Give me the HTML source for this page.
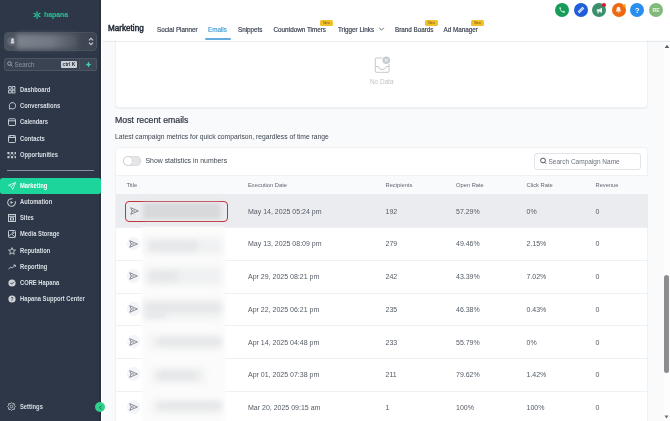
<!DOCTYPE html>
<html><head><meta charset="utf-8">
<style>
*{box-sizing:border-box;margin:0;padding:0}
html,body{width:670px;height:421px;overflow:hidden;background:#f8fafc;font-family:"Liberation Sans",sans-serif}
.abs{position:absolute}
#sb{position:absolute;left:0;top:0;width:101px;height:421px;background:#2d3748;overflow:hidden}
#sbline{position:absolute;left:101px;top:0;width:1px;height:421px;background:#ffffff}
.logo{position:absolute;left:44px;top:10px;color:#27c79a;font-weight:bold;font-size:6.9px;line-height:9px;letter-spacing:0}
.acct{position:absolute;left:3.5px;top:31.8px;width:93.5px;height:19.5px;border-radius:4px;background:linear-gradient(90deg,#4b535f,#444c59 60%,#3c4452);border:1px solid #4a525e}
.srch{position:absolute;left:4px;top:58px;width:76px;height:13px;border-radius:2px 0 0 2px;background:#3a4352;border:1px solid #4d5563}
.plus{position:absolute;left:79px;top:58px;width:18px;height:13px;border-radius:0 2px 2px 0;background:#3d4655;border:1px solid #4d5563}
.nav{position:absolute;left:0;width:101px;height:12px;color:#dadee4;font-size:6.3px;font-weight:bold}
.nav span{position:absolute;left:19.8px;top:0.5px;line-height:10px;transform:scaleX(0.92);transform-origin:0 0;white-space:nowrap}
.nav svg{position:absolute;left:8px;top:2px;width:8px;height:8px}
#hdr{position:absolute;left:102px;top:0;width:568px;height:40px;background:#fff}
#hdrline{position:absolute;left:102px;top:40.5px;width:568px;height:1.5px;background:#eaecee}
.tab{position:absolute;top:24.6px;font-size:6.3px;color:#3a4351;line-height:9px;-webkit-text-stroke:0.18px currentColor}
.new{position:absolute;top:20px;width:13px;height:6px;background:#f0bf2a;border-radius:1.5px;font-size:3.3px;color:#6a5210;text-align:center;line-height:6px}
.circ{position:absolute;top:3px;width:14px;height:14px;border-radius:50%}
.card{position:absolute;background:#fff;border:1px solid #f0f1f3;border-radius:4px;box-shadow:0 1px 1px rgba(20,30,50,.05)}
.th{position:absolute;top:181px;font-size:5.75px;color:#5f6672;line-height:8px}
.rowline{position:absolute;left:116px;width:532px;height:1px;background:#eef0f2}
.td{position:absolute;font-size:7px;color:#535a66;line-height:10px;margin-top:1.3px}
.ico{position:absolute;left:126.8px;width:13.5px;height:13.5px;border-radius:50%;background:#f3f4f7;margin-top:0.3px}
.ico svg{position:absolute;left:2.7px;top:3px}
.blurp{position:absolute;left:142px;width:83px;height:33px;background:#fbfbfb;filter:blur(1.5px)}
.smudge{position:absolute;height:8px;background:#e5e6e8;filter:blur(2.8px);border-radius:4px}
#root{position:absolute;left:0;top:0;width:670px;height:421px;overflow:hidden;will-change:transform;background:#f8fafc}
</style></head><body><div id="root">
<div id="sb">
  <div class="abs" style="left:99px;top:0;width:2px;height:421px;background:#292f3b"></div>
  <svg class="abs" style="left:33px;top:11px" width="8" height="8" viewBox="0 0 8 8"><g stroke="#2bc99b" stroke-width="1.15" stroke-linecap="round"><path d="M4 0.6 V2.9 M4 5.1 V7.4 M1 2.3 L3 3.4 M5 4.6 L7 5.7 M1 5.7 L3 4.6 M5 3.4 L7 2.3"/></g></svg>
  <div class="logo">hapana</div>
  <div class="acct"></div>
  <div class="abs" style="left:16px;top:34px;width:62px;height:15px;background:linear-gradient(90deg,#7d838c,#737a84 55%,#4d5561);filter:blur(2.5px);border-radius:3px"></div>
  <div class="abs" style="left:7px;top:36.5px;width:9.5px;height:9.5px;border-radius:50%;background:#5f6671;filter:blur(0.7px)"></div>
  <svg class="abs" style="left:10px;top:38px" width="5" height="6" viewBox="0 0 5 6"><circle cx="2.5" cy="1.8" r="1.5" fill="#d5d9df"/><rect x="0.6" y="3.3" width="3.8" height="2.2" rx="1" fill="#d5d9df"/></svg>
  <svg class="abs" style="left:88px;top:37px" width="6" height="9" viewBox="0 0 6 9"><path d="M1 3.3 L3 1.3 L5 3.3 M1 5.7 L3 7.7 L5 5.7" stroke="#c9cdd3" stroke-width="1.1" fill="none"/></svg>
  <div class="srch"></div>
  <svg class="abs" style="left:7px;top:61px" width="6" height="6" viewBox="0 0 6 6"><circle cx="2.5" cy="2.5" r="1.8" stroke="#aab0b8" stroke-width="0.9" fill="none"/><line x1="3.8" y1="3.8" x2="5.4" y2="5.4" stroke="#aab0b8" stroke-width="0.9"/></svg>
  <div class="abs" style="left:14.5px;top:59.5px;font-size:6.3px;color:#8e95a0;line-height:9px">Search</div>
  <div class="abs" style="left:61px;top:61px;width:16px;height:7px;background:#cdd1d7;border-radius:1px;font-size:5px;line-height:7px;color:#2a323e;text-align:center;font-weight:bold">ctrl K</div>
  <div class="plus"></div>
  <svg class="abs" style="left:85px;top:61.3px" width="7" height="7" viewBox="0 0 7 7"><path d="M3.5 0.5 Q3.9 3.1 6.5 3.5 Q3.9 3.9 3.5 6.5 Q3.1 3.9 0.5 3.5 Q3.1 3.1 3.5 0.5 Z" fill="#45d2ab"/></svg>

  <div class="nav" style="top:84px"><svg viewBox="0 0 8 8" style="width:7.5px;height:7.5px;top:2.3px"><g fill="none" stroke="#bcc2cb" stroke-width="1.1"><rect x="0.6" y="0.6" width="2.9" height="2.9" rx="1"/><rect x="4.5" y="0.6" width="2.9" height="2.9" rx="0.3"/><rect x="0.6" y="4.5" width="2.9" height="2.9" rx="0.3"/><rect x="4.5" y="4.5" width="2.9" height="2.9" rx="0.3"/></g></svg><span>Dashboard</span></div>
  <div class="nav" style="top:100px"><svg viewBox="0 0 8 8"><path d="M1.3 7 L1.7 5.3 A3.2 3.2 0 1 1 3 6.6 Z" fill="none" stroke="#c6cbd2" stroke-width="1"/></svg><span>Conversations</span></div>
  <div class="nav" style="top:116px"><svg viewBox="0 0 8 8"><g fill="none" stroke="#c6cbd2" stroke-width="1"><rect x="0.5" y="0.8" width="7" height="6.7" rx="0.8"/><line x1="0.5" y1="2.8" x2="7.5" y2="2.8"/></g></svg><span>Calendars</span></div>
  <div class="nav" style="top:133px"><svg viewBox="0 0 8 8"><g fill="none" stroke="#c6cbd2" stroke-width="1"><rect x="0.5" y="0.5" width="7" height="7" rx="0.8"/><line x1="0.5" y1="2.5" x2="7.5" y2="2.5"/><line x1="2" y1="0.5" x2="2" y2="2.5"/><line x1="6" y1="0.5" x2="6" y2="2.5"/></g></svg><span>Contacts</span></div>
  <div class="nav" style="top:149px"><svg viewBox="0 0 8 8" style="left:7px;top:2px;width:9px;height:9px"><g fill="#c3c8d0"><rect x="0.3" y="0.8" width="2" height="2" rx="0.6"/><rect x="3.5" y="0.8" width="2" height="2" rx="0.6"/><rect x="6.7" y="0.8" width="2" height="2" rx="0.6"/><rect x="0.3" y="4.5" width="2" height="2" rx="0.6"/><rect x="3.5" y="4.5" width="2" height="2" rx="0.6"/><rect x="6.7" y="4.5" width="2" height="2" rx="0.6"/></g><path d="M2.3 2.8 L3.5 4.5 M5.5 2.8 L6.7 4.5 M5.5 4.5 L6.7 2.8 M2.3 4.5 L3.5 2.8" stroke="#8d949e" stroke-width="0.5"/></svg><span>Opportunities</span></div>
  <div class="abs" style="left:7px;top:170px;width:87px;height:1px;background:#8a919c"></div>
  <div class="abs" style="left:0;top:177.8px;width:101px;height:16.2px;background:#1bd59a;border-radius:2.5px"></div>
  <div class="nav" style="top:180px;color:#fff"><svg viewBox="0 0 8 8"><path d="M7.5 0.5 L0.5 3.2 L3.5 4.5 L4.8 7.5 Z M3.5 4.5 L7.5 0.5" fill="none" stroke="#f4fffb" stroke-width="0.7" stroke-linejoin="round"/></svg><span>Marketing</span></div>
  <div class="nav" style="top:196px"><svg viewBox="0 0 8 8" style="left:7px;top:1.8px;width:9px;height:9px"><path d="M4.9 0.7 A3.4 3.4 0 1 0 7.2 2.8" fill="none" stroke="#c6cbd2" stroke-width="0.9"/><path d="M3.1 2.6 L5.6 4 L3.1 5.4 Z" fill="#c6cbd2"/></svg><span>Automation</span></div>
  <div class="nav" style="top:212px"><svg viewBox="0 0 8 8"><g fill="none" stroke="#c6cbd2" stroke-width="1"><rect x="0.5" y="0.5" width="7" height="7"/><line x1="0.5" y1="2.3" x2="7.5" y2="2.3"/><rect x="2.5" y="3.8" width="3" height="2.2"/></g></svg><span>Sites</span></div>
  <div class="nav" style="top:228px"><svg viewBox="0 0 8 8"><g fill="none" stroke="#c6cbd2" stroke-width="1"><rect x="0.5" y="0.5" width="7" height="7" rx="0.8"/><path d="M0.8 6.5 L3.5 3.8 L7 7"/><circle cx="5.3" cy="2.6" r="0.8"/></g></svg><span>Media Storage</span></div>
  <div class="nav" style="top:245px"><svg viewBox="0 0 8 8"><path d="M4 0.6 L5 3 L7.5 3.1 L5.6 4.7 L6.2 7.3 L4 5.9 L1.8 7.3 L2.4 4.7 L0.5 3.1 L3 3 Z" fill="none" stroke="#c6cbd2" stroke-width="0.9" stroke-linejoin="round"/></svg><span>Reputation</span></div>
  <div class="nav" style="top:261px"><svg viewBox="0 0 8 8"><path d="M0.5 6.3 L2.8 3.9 L4.3 5 L7.3 2 M5.3 2 H7.3 V4" fill="none" stroke="#c6cbd2" stroke-width="0.9"/></svg><span>Reporting</span></div>
  <div class="nav" style="top:277px"><svg viewBox="0 0 8 8"><circle cx="4" cy="4" r="3.6" fill="#d0d4da"/><path d="M2.3 3.8 L3.6 5.2 L5.8 2.8" stroke="#2b3545" stroke-width="0.9" fill="none"/></svg><span>CORE Hapana</span></div>
  <div class="nav" style="top:293px"><svg viewBox="0 0 8 8"><circle cx="4" cy="4" r="3.6" fill="#d0d4da"/><text x="4" y="6" font-size="5" text-anchor="middle" fill="#2b3545" font-family="Liberation Sans" font-weight="bold">?</text></svg><span>Hapana Support Center</span></div>
  <div class="nav" style="top:401px"><svg viewBox="0 0 8 8" style="left:7px;top:1px;width:9px;height:9px"><path d="M4 0.5 L5 1.5 L6.5 1.5 L6.5 3 L7.5 4 L6.5 5 L6.5 6.5 L5 6.5 L4 7.5 L3 6.5 L1.5 6.5 L1.5 5 L0.5 4 L1.5 3 L1.5 1.5 L3 1.5 Z" fill="none" stroke="#c6cbd2" stroke-width="0.8"/><circle cx="4" cy="4" r="1.2" fill="none" stroke="#c6cbd2" stroke-width="0.7"/></svg><span>Settings</span></div>
</div>
<div id="sbline"></div>
<div class="abs" style="left:95px;top:402.3px;width:10px;height:10px;border-radius:50%;background:#2fcf8e"></div>
<svg class="abs" style="left:96.5px;top:404px" width="7" height="7" viewBox="0 0 7 7"><path d="M4.3 1.8 L2.6 3.5 L4.3 5.2" stroke="#106a45" stroke-width="1" fill="none"/></svg>

<div class="card" style="left:115px;top:36px;width:533px;height:72px;border-radius:0 0 4px 4px"></div>
<div id="hdr"></div><div id="hdrline"></div>
<div class="abs" style="left:108px;top:23px;font-size:8.15px;color:#222a36;line-height:11px;-webkit-text-stroke:0.45px #222a36">Marketing</div>
<div class="tab" style="left:157px">Social Planner</div>
<div class="tab" style="left:208px;color:#4aa1d8">Emails</div>
<div class="abs" style="left:205px;top:38.2px;width:26px;height:1.5px;background:#62acdf;border-radius:1px"></div>
<div class="tab" style="left:238px">Snippets</div>
<div class="tab" style="left:273.5px">Countdown Timers</div>
<div class="new" style="left:320px">New</div>
<div class="tab" style="left:338px">Trigger Links</div>
<svg class="abs" style="left:378px;top:26px" width="7" height="6" viewBox="0 0 7 6"><path d="M1.2 1.8 L3.5 4.1 L5.8 1.8" stroke="#4a5360" stroke-width="0.9" fill="none"/></svg>
<div class="tab" style="left:395px">Brand Boards</div>
<div class="new" style="left:425px">New</div>
<div class="tab" style="left:443.5px">Ad Manager</div>
<div class="new" style="left:471px">New</div>

<div class="circ" style="left:554.7px;background:#179b59"></div>
<svg class="abs" style="left:557.5px;top:6px" width="8" height="8" viewBox="0 0 7 7"><path d="M1.2 1 C1 3.5 3.5 6 6 5.8 L6 4.6 L4.6 4.1 L4 4.7 C3.2 4.3 2.6 3.7 2.2 2.9 L2.8 2.3 L2.3 1 Z" fill="#c4ebd3"/></svg>
<div class="circ" style="left:573.5px;background:#1f5ed8"></div>
<svg class="abs" style="left:576.5px;top:6px" width="8" height="8" viewBox="0 0 8 8"><g fill="#dfe8fb" transform="rotate(-45 4 4)"><rect x="0.5" y="2.6" width="7" height="2.8" rx="0.5"/></g><g fill="#1f5ed8" transform="rotate(-45 4 4)"><circle cx="2.3" cy="4" r="0.45"/><circle cx="4" cy="4" r="0.45"/><circle cx="5.7" cy="4" r="0.45"/></g></svg>
<div class="circ" style="left:592.2px;background:#3b8f6d"></div>
<svg class="abs" style="left:595.5px;top:6.5px" width="8" height="7" viewBox="0 0 8 7"><path d="M0.8 2.3 H2.8 L6 0.8 V6 L2.8 4.6 H0.8 Z" fill="#e6f2ec"/><rect x="1.5" y="4.4" width="1.3" height="2" fill="#e6f2ec"/></svg>
<div class="abs" style="left:602.2px;top:2.8px;width:4.2px;height:4.2px;border-radius:50%;background:#e0142b"></div>
<div class="circ" style="left:611.6px;background:#ee6912"></div>
<svg class="abs" style="left:615px;top:6px" width="7" height="8" viewBox="0 0 7 8"><path d="M3.5 0.8 C1.8 0.8 1.6 2.5 1.6 3.6 C1.6 4.8 0.8 5.6 0.8 5.6 H6.2 C6.2 5.6 5.4 4.8 5.4 3.6 C5.4 2.5 5.2 0.8 3.5 0.8 Z M2.7 6.3 H4.3 L3.5 7.2 Z" fill="#fff4ea"/></svg>
<div class="abs" style="left:622.5px;top:3.5px;width:3px;height:3px;border-radius:50%;background:#f5b021"></div>
<div class="circ" style="left:630.2px;background:#2a8ef1"></div>
<div class="abs" style="left:630.2px;top:5.5px;width:14px;text-align:center;font-size:7.5px;font-weight:bold;color:#fff;line-height:9px">?</div>
<div class="circ" style="left:649.2px;background:#80b97a"></div>
<div class="abs" style="left:649.2px;top:6.5px;width:14px;text-align:center;font-size:5.2px;font-weight:bold;color:#eef6ea;line-height:7px">RE</div>

<!-- No data card -->
<svg class="abs" style="left:374px;top:54.7px" width="18" height="19" viewBox="0 0 18 19"><path d="M8.5 3 H2.3 Q1.3 3 1.3 4 V16.3 Q1.3 17.3 2.3 17.3 H14 Q15 17.3 15 16.3 V9" fill="none" stroke="#c5c8cd" stroke-width="1"/><path d="M1.3 11.5 H4.3 Q5 14.6 8.2 14.6 Q11.4 14.6 12 11.5 H15" fill="none" stroke="#c5c8cd" stroke-width="1"/><circle cx="12.3" cy="5.3" r="3.8" fill="#c8cbd0"/><path d="M10.9 3.9 L13.7 6.7 M13.7 3.9 L10.9 6.7" stroke="#fff" stroke-width="0.9"/></svg>
<div class="abs" style="left:370px;top:77.4px;font-size:6.4px;color:#bec1c7;line-height:9px">No Data</div>

<div class="abs" style="left:115px;top:114.8px;font-size:8.75px;color:#2d3440;line-height:11px;-webkit-text-stroke:0.2px #2d3440">Most recent emails</div>
<div class="abs" style="left:115px;top:131.5px;font-size:6.75px;color:#3e4550;line-height:9px">Latest campaign metrics for quick comparison, regardless of time range</div>

<!-- table card -->
<div class="card" style="left:115px;top:146.5px;width:533px;height:290px"></div>
<div class="abs" style="left:123px;top:156px;width:17.5px;height:10px;border-radius:5px;background:#e4e5e7;box-shadow:inset 0 0 0 0.6px #d3d5d8"></div>
<div class="abs" style="left:123.7px;top:156.7px;width:8.6px;height:8.6px;border-radius:50%;background:#fff;box-shadow:0 0 0 0.6px #c9cbcf"></div>
<div class="abs" style="left:145.5px;top:155.8px;font-size:6.9px;color:#3f4651;line-height:9px">Show statistics in numbers</div>
<div class="abs" style="left:533.5px;top:152.5px;width:107.5px;height:17px;border:1px solid #e1e4e8;border-radius:3px;background:#fff"></div>
<svg class="abs" style="left:539.5px;top:157px" width="7" height="8" viewBox="0 0 7 8"><circle cx="3" cy="3.5" r="2.4" stroke="#3a414c" stroke-width="0.9" fill="none"/><line x1="4.7" y1="5.3" x2="6.2" y2="6.8" stroke="#3a414c" stroke-width="0.9"/></svg>
<div class="abs" style="left:548.5px;top:156.5px;font-size:6.5px;color:#6a717c;line-height:9px">Search Campaign Name</div>

<div class="abs" style="left:116px;top:174.5px;width:532px;height:19.5px;background:#f9fafb;border-top:1px solid #eff1f3"></div>
<div class="th" style="left:126.5px">Title</div>
<div class="th" style="left:248px">Execution Date</div>
<div class="th" style="left:385.5px">Recipients</div>
<div class="th" style="left:456px">Open Rate</div>
<div class="th" style="left:526.5px">Click Rate</div>
<div class="th" style="left:595.5px">Revenue</div>

<div class="abs" style="left:116px;top:194px;width:532px;height:33px;background:#ebecef"></div>
<div class="rowline" style="top:227.1px"></div>
<div class="rowline" style="top:259.8px"></div>
<div class="rowline" style="top:292.5px"></div>
<div class="rowline" style="top:325.3px"></div>
<div class="rowline" style="top:358.0px"></div>
<div class="rowline" style="top:390.7px"></div>

<!-- blurred title patches -->
<div class="blurp" style="top:227px;height:198px"></div>
<div class="smudge" style="left:145px;top:238px;width:77px;height:16px;background:#f0f1f2;filter:blur(3px)"></div>
<div class="smudge" style="left:145px;top:267px;width:77px;height:18px;background:#f0f1f2;filter:blur(3px)"></div>
<div class="smudge" style="left:143px;top:300px;width:79px;height:19px;background:#f0f1f2;filter:blur(3px)"></div>
<div class="smudge" style="left:150px;top:335px;width:72px;height:14px;background:#f0f1f2;filter:blur(3px)"></div>
<div class="smudge" style="left:152px;top:368px;width:53px;height:15px;background:#f0f1f2;filter:blur(3px)"></div>
<div class="smudge" style="left:152px;top:400px;width:70px;height:13px;background:#f0f1f2;filter:blur(3px)"></div>
<div class="smudge" style="left:149px;top:241px;width:49px;height:10px;background:#e6e7e9;filter:blur(2.5px)"></div>
<div class="smudge" style="left:149px;top:271px;width:29px;height:11px;background:#e6e7e9;filter:blur(2.5px)"></div>
<div class="smudge" style="left:145px;top:303px;width:76px;height:9px;background:#e6e7e9;filter:blur(2.5px)"></div>
<div class="smudge" style="left:158px;top:338px;width:63px;height:8px;background:#e6e7e9;filter:blur(2.5px)"></div>
<div class="smudge" style="left:158px;top:371px;width:39px;height:9px;background:#e6e7e9;filter:blur(2.5px)"></div>
<div class="smudge" style="left:158px;top:402px;width:63px;height:8px;background:#e6e7e9;filter:blur(2.5px)"></div>
<div class="smudge" style="left:145px;top:312px;width:21px;height:6px;background:#e6e7e9;filter:blur(2.5px)"></div>

<!-- row 1 highlight -->
<div class="abs" style="left:125px;top:201px;width:102.5px;height:20.5px;border:1.6px solid #c2323f;border-radius:4px"></div>
<div class="abs" style="left:143px;top:203px;width:78px;height:16px;background:#d8d9db;filter:blur(2px)"></div>
<svg class="abs" style="left:129.5px;top:206.8px" width="9" height="8" viewBox="0 0 10 9"><path d="M0.8 0.8 L9.3 4.5 L0.8 8.2 L2.4 4.5 Z M2.4 4.5 H5.6" fill="none" stroke="#666c77" stroke-width="0.85" stroke-linejoin="round"/></svg>

<div class="ico" style="top:236.3px"><svg width="9" height="8" viewBox="0 0 10 9"><path d="M0.8 0.8 L9.3 4.5 L0.8 8.2 L2.4 4.5 Z M2.4 4.5 H5.6" fill="none" stroke="#666c77" stroke-width="0.85" stroke-linejoin="round"/></svg></div>
<div class="ico" style="top:269.0px"><svg width="9" height="8" viewBox="0 0 10 9"><path d="M0.8 0.8 L9.3 4.5 L0.8 8.2 L2.4 4.5 Z M2.4 4.5 H5.6" fill="none" stroke="#666c77" stroke-width="0.85" stroke-linejoin="round"/></svg></div>
<div class="ico" style="top:301.8px"><svg width="9" height="8" viewBox="0 0 10 9"><path d="M0.8 0.8 L9.3 4.5 L0.8 8.2 L2.4 4.5 Z M2.4 4.5 H5.6" fill="none" stroke="#666c77" stroke-width="0.85" stroke-linejoin="round"/></svg></div>
<div class="ico" style="top:334.5px"><svg width="9" height="8" viewBox="0 0 10 9"><path d="M0.8 0.8 L9.3 4.5 L0.8 8.2 L2.4 4.5 Z M2.4 4.5 H5.6" fill="none" stroke="#666c77" stroke-width="0.85" stroke-linejoin="round"/></svg></div>
<div class="ico" style="top:367.2px"><svg width="9" height="8" viewBox="0 0 10 9"><path d="M0.8 0.8 L9.3 4.5 L0.8 8.2 L2.4 4.5 Z M2.4 4.5 H5.6" fill="none" stroke="#666c77" stroke-width="0.85" stroke-linejoin="round"/></svg></div>
<div class="ico" style="top:399.9px"><svg width="9" height="8" viewBox="0 0 10 9"><path d="M0.8 0.8 L9.3 4.5 L0.8 8.2 L2.4 4.5 Z M2.4 4.5 H5.6" fill="none" stroke="#666c77" stroke-width="0.85" stroke-linejoin="round"/></svg></div>

<!-- rows text -->
<div class="td" style="left:248px;top:205.5px">May 14, 2025 05:24 pm</div>
<div class="td" style="left:385.5px;top:205.5px">192</div>
<div class="td" style="left:456px;top:205.5px">57.29%</div>
<div class="td" style="left:526.5px;top:205.5px">0%</div>
<div class="td" style="left:595.5px;top:205.5px">0</div>

<div class="td" style="left:248px;top:238.2px">May 13, 2025 08:09 pm</div>
<div class="td" style="left:385.5px;top:238.2px">279</div>
<div class="td" style="left:456px;top:238.2px">49.46%</div>
<div class="td" style="left:526.5px;top:238.2px">2.15%</div>
<div class="td" style="left:595.5px;top:238.2px">0</div>

<div class="td" style="left:248px;top:270.9px">Apr 29, 2025 08:21 pm</div>
<div class="td" style="left:385.5px;top:270.9px">242</div>
<div class="td" style="left:456px;top:270.9px">43.39%</div>
<div class="td" style="left:526.5px;top:270.9px">7.02%</div>
<div class="td" style="left:595.5px;top:270.9px">0</div>

<div class="td" style="left:248px;top:303.7px">Apr 22, 2025 06:21 pm</div>
<div class="td" style="left:385.5px;top:303.7px">235</div>
<div class="td" style="left:456px;top:303.7px">46.38%</div>
<div class="td" style="left:526.5px;top:303.7px">0.43%</div>
<div class="td" style="left:595.5px;top:303.7px">0</div>

<div class="td" style="left:248px;top:336.4px">Apr 14, 2025 04:48 pm</div>
<div class="td" style="left:385.5px;top:336.4px">233</div>
<div class="td" style="left:456px;top:336.4px">55.79%</div>
<div class="td" style="left:526.5px;top:336.4px">0%</div>
<div class="td" style="left:595.5px;top:336.4px">0</div>

<div class="td" style="left:248px;top:369.1px">Apr 01, 2025 07:38 pm</div>
<div class="td" style="left:385.5px;top:369.1px">211</div>
<div class="td" style="left:456px;top:369.1px">79.62%</div>
<div class="td" style="left:526.5px;top:369.1px">1.42%</div>
<div class="td" style="left:595.5px;top:369.1px">0</div>

<div class="td" style="left:248px;top:401.8px">Mar 20, 2025 09:15 am</div>
<div class="td" style="left:385.5px;top:401.8px">1</div>
<div class="td" style="left:456px;top:401.8px">100%</div>
<div class="td" style="left:526.5px;top:401.8px">100%</div>
<div class="td" style="left:595.5px;top:401.8px">0</div>

<!-- scrollbar -->
<div class="abs" style="left:664px;top:42px;width:6px;height:379px;background:#fdfdfd"></div>
<svg class="abs" style="left:664px;top:44px" width="6" height="5" viewBox="0 0 6 5"><path d="M3 0.8 L5.3 4 H0.7 Z" fill="#5e5e5e"/></svg>
<div class="abs" style="left:664.3px;top:274.5px;width:5px;height:98px;border-radius:2.5px;background:#8d8d8f"></div>
<svg class="abs" style="left:664px;top:415px" width="5" height="4" viewBox="0 0 5 4"><path d="M0.5 0.5 H4.5 L2.5 3.5 Z" fill="#6b6b6b"/></svg>
</div></body></html>
